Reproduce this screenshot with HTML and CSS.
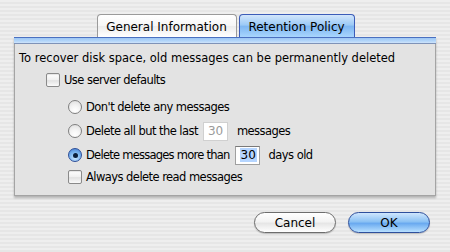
FILE: index.html
```html
<!DOCTYPE html>
<html>
<head>
<meta charset="utf-8">
<link rel="stylesheet" href="styles.css">
</head>
<body>
<div class="window">
  <div class="tabs">
    <div class="tab">General Information</div>
    <div class="tab tab-active">Retention Policy</div>
  </div>
  <div class="panel">
    <div class="panel-band"></div>
    <div class="panel-body">
      <div class="intro">To recover disk space, old messages can be permanently deleted</div>
      <label class="row row-top"><span class="check"></span><span>Use server defaults</span></label>
      <div class="group">
        <label class="row"><span class="radio"></span><span>Don't delete any messages</span></label>
        <label class="row"><span class="radio"></span><span>Delete all but the last</span><span class="field field-disabled">30</span><span class="after">messages</span></label>
        <label class="row"><span class="radio radio-on"><span class="dot"></span></span><span class="tight">Delete messages more than</span><span class="field"><span class="sel">30</span></span><span class="after">days old</span></label>
        <label class="row row-last"><span class="check"></span><span>Always delete read messages</span></label>
      </div>
    </div>
  </div>
  <div class="buttons">
    <div class="btn">Cancel</div>
    <div class="btn btn-default">OK</div>
  </div>
</div>
</body>
</html>
```

FILE: styles.css
```css
html, body {
  margin: 0;
  padding: 0;
}
body {
  width: 450px;
  height: 252px;
  overflow: hidden;
  font-family: "DejaVu Sans", "Lucida Grande", sans-serif;
  font-size: 11.5px;
  color: #000;
  background: repeating-linear-gradient(180deg, #eeeeee 0px, #eeeeee 2px, #e6e6e6 2px, #e6e6e6 4px);
}
.window {
  padding: 14px 14px 0 14px;
  display: flex;
  flex-direction: column;
}
.tabs {
  display: flex;
  justify-content: center;
  gap: 2px;
  height: 23px;
  position: relative;
  z-index: 2;
  margin-left: 1px;
}
.tab {
  height: 23px;
  box-sizing: border-box;
  padding: 1px 0 0 0;
  display: flex;
  align-items: center;
  justify-content: center;
  white-space: nowrap;
  border: 1px solid #9a9a9a;
  border-bottom: none;
  border-radius: 4px 4px 0 0;
  background: linear-gradient(180deg, #ffffff 0%, #f6f6f6 50%, #ececec 51%, #ffffff 100%);
  font-size: 12px;
}
.tab:first-child { width: 140px; }
.tab-active {
  width: 116px;
  border-color: #3b5cb8;
  background: linear-gradient(180deg, #d2e6fb 0%, #9ccaf6 45%, #7fb7f2 52%, #a8d5fd 100%);
}
.panel {
  width: 422px;
  height: 159px;
  background: #e3e3e3;
  border: 1px solid #a4a4a4;
  border-top: none;
  box-sizing: border-box;
  box-shadow: 0 2px 2px rgba(0,0,0,0.25);
  display: flex;
  flex-direction: column;
}
.panel-band {
  height: 5px;
  margin: 0 -1px;
  border-top: 1px solid #4a70c0;
  border-bottom: 1px solid #7f93b8;
  background: linear-gradient(180deg, #9dc6f3 0%, #b3d6fa 60%, #cfe4fb 100%);
}
.panel-body {
  padding: 6px 0 0 4px;
  display: flex;
  flex-direction: column;
}
.intro {
  height: 16px;
  line-height: 16px;
}
.row {
  display: flex;
  align-items: center;
  gap: 4px;
  height: 24px;
  letter-spacing: -0.55px;
}
.tight {
  letter-spacing: -0.75px;
}
.row-top {
  margin-left: 27px;
  height: 22px;
  margin-top: 3px;
}
.row-last {
  margin-top: -2px;
}
.group {
  display: flex;
  flex-direction: column;
  margin-left: 49px;
  margin-top: 4px;
}
.check {
  width: 12px;
  height: 12px;
  border: 1px solid #8a8a8a;
  border-radius: 2px;
  background: linear-gradient(180deg, #ffffff 0%, #f0f0f0 50%, #e2e2e2 55%, #fafafa 100%);
  box-shadow: inset 0 1px 1px rgba(0,0,0,0.1);
}
.radio {
  width: 12px;
  height: 12px;
  border: 1px solid #7f7f7f;
  border-radius: 50%;
  background: radial-gradient(circle at 50% 80%, #ffffff 0%, #f5f5f5 40%, #dcdcdc 100%);
  display: flex;
  align-items: center;
  justify-content: center;
}
.radio-on {
  border-color: #2f4f99;
  background: radial-gradient(circle at 50% 75%, #c9e6ff 0%, #7db8f0 50%, #3d78cf 100%);
}
.dot {
  width: 5px;
  height: 5px;
  border-radius: 50%;
  background: #0a1f3a;
}
.field {
  margin-left: 1px;
  width: 25px;
  height: 19px;
  box-sizing: border-box;
  border: 1px solid #a0a0a0;
  border-top-color: #7a7a7a;
  background: #fff;
  display: flex;
  align-items: center;
  padding-left: 4px;
  font-size: 12px;
  letter-spacing: 0;
}
.field-disabled {
  color: #9a9a9a;
  border-color: #d0d0d0;
}
.sel {
  background: #b5d5ff;
  padding: 0 1px;
}
.after {
  margin-left: 5px;
}
.buttons {
  display: flex;
  justify-content: flex-end;
  gap: 12px;
  margin-top: 16px;
  margin-right: 6px;
}
.btn {
  width: 82px;
  height: 21px;
  box-sizing: border-box;
  border: 1px solid #6d6d6d;
  border-radius: 11px;
  display: flex;
  align-items: center;
  justify-content: center;
  background: linear-gradient(180deg, #ffffff 0%, #f3f3f3 45%, #e6e6e6 55%, #ffffff 100%);
  box-shadow: 0 1px 1px rgba(0,0,0,0.2);
  font-size: 12px;
}
.btn-default {
  border-color: #2e4f9c;
  background: linear-gradient(180deg, #cfe6fd 0%, #8cc2f4 45%, #6aaaf0 55%, #b8e0ff 100%);
}
```
